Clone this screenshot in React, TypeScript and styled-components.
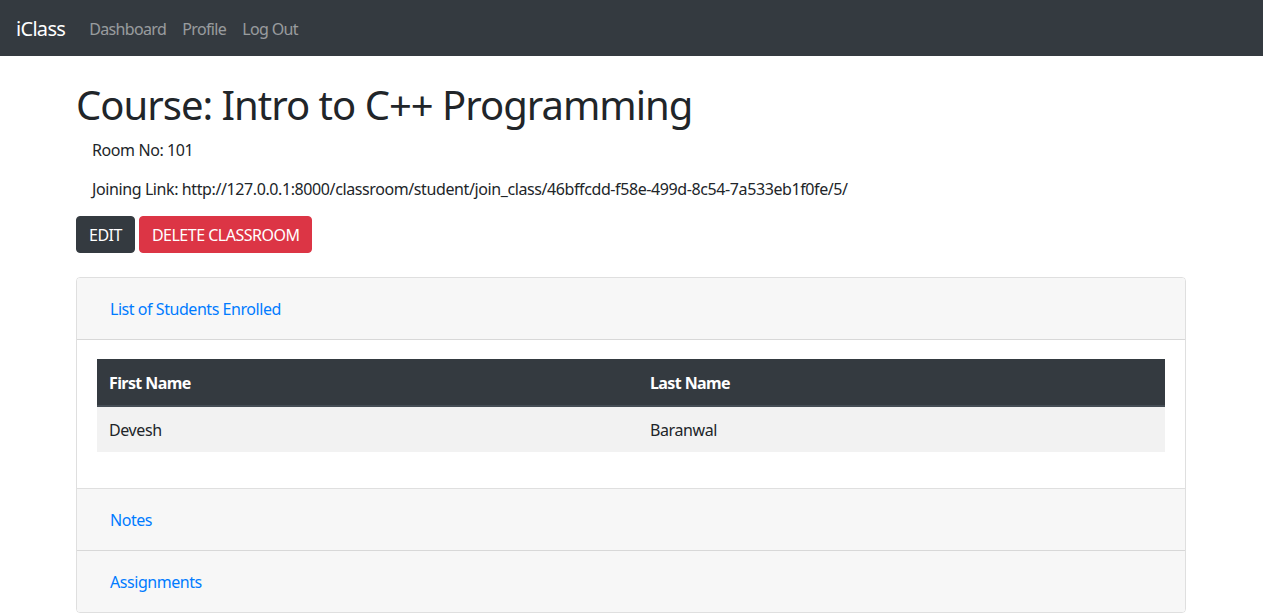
import React from "react";
import styled, { createGlobalStyle } from "styled-components";

const GlobalStyle = createGlobalStyle`
  *, *::before, *::after { box-sizing: border-box; }
  body {
    margin: 0;
    background: #fff;
    color: #212529;
    font-family: "Noto Sans", "Open Sans", sans-serif;
    font-size: 16px;
    line-height: 1.5;
    letter-spacing: -0.4px;
  }
`;

const Navbar = styled.nav`
  height: 56px;
  background: #343a40;
  display: flex;
  align-items: center;
  padding: 8px 16px;
`;

const Brand = styled.a`
  color: #fff;
  font-size: 20px;
  line-height: 30px;
  padding: 6px 0 4px;
  margin-right: 16px;
  text-decoration: none;
  letter-spacing: -0.7px;
`;

const NavList = styled.ul`
  display: flex;
  list-style: none;
  margin: 0;
  padding: 0;
`;

const NavLink = styled.a`
  display: block;
  padding: 9px 8px 7px;
  color: rgba(255, 255, 255, 0.5);
  text-decoration: none;
  letter-spacing: -0.64px;
`;

const Container = styled.main`
  max-width: 1140px;
  margin: 0 auto;
  padding: 0 15.5px 0 14.5px;
`;

const Title = styled.h1`
  font-size: 40px;
  line-height: 48px;
  font-weight: 400;
  letter-spacing: -1px;
  margin: 25px 0 8px;
`;

const Info = styled.p`
  margin: 0 0 14px;
  padding: 1px 0 0 16px;
`;

const ButtonRow = styled.div`
  display: flex;
  gap: 4px;
  margin-top: 15px;
`;

const Button = styled.button<{ $variant: "dark" | "danger" }>`
  font-family: inherit;
  letter-spacing: -0.5px;
  font-size: 16px;
  line-height: 23px;
  padding: 7px 12px 5px;
  border-radius: 4px;
  color: #fff;
  border: 1px solid ${(p) => (p.$variant === "dark" ? "#343a40" : "#dc3545")};
  background: ${(p) => (p.$variant === "dark" ? "#343a40" : "#dc3545")};
`;

const Accordion = styled.section`
  margin-top: 24px;
  border: 1px solid rgba(0, 0, 0, 0.125);
  border-radius: 4px;
  overflow: hidden;
`;

const CardHeader = styled.div<{ $last?: boolean }>`
  background: #f7f7f7;
  padding: 12px 20px;
  border-bottom: ${(p) => (p.$last ? "0" : "1px solid rgba(0, 0, 0, 0.125)")};
`;

const LinkButton = styled.button`
  font-family: inherit;
  letter-spacing: -0.45px;
  font-size: 16px;
  line-height: 23px;
  padding: 7px 12px 5px;
  border: 1px solid transparent;
  background: transparent;
  color: #007bff;
  cursor: pointer;
`;

const CardBody = styled.div`
  padding: 19px 20px 20px;
  border-bottom: 1px solid rgba(0, 0, 0, 0.125);
`;

const Table = styled.table`
  width: 100%;
  border-collapse: collapse;
  margin-bottom: 16px;
`;

const Th = styled.th<{ $width?: string }>`
  width: ${(p) => p.$width || "auto"};
  background: #343a40;
  color: #fff;
  text-align: left;
  font-weight: 700;
  letter-spacing: -0.6px;
  padding: 12px 12px 10px;
  line-height: 24px;
  border-bottom: 2px solid #454d55;
`;

const Td = styled.td`
  padding: 11px 12px 10px;
  line-height: 24px;
`;

const StripedRow = styled.tr`
  background: #f2f2f2;
`;

const students = [{ first: "Devesh", last: "Baranwal" }];

export default function App() {
  return (
    <>
      <GlobalStyle />
      <Navbar>
        <Brand href="#">iClass</Brand>
        <NavList>
          <li><NavLink href="#">Dashboard</NavLink></li>
          <li><NavLink href="#">Profile</NavLink></li>
          <li><NavLink href="#">Log Out</NavLink></li>
        </NavList>
      </Navbar>
      <Container>
        <Title>Course: Intro to C++ Programming</Title>
        <Info>Room No: 101</Info>
        <Info>
          Joining Link: http://127.0.0.1:8000/classroom/student/join_class/46bffcdd-f58e-499d-8c54-7a533eb1f0fe/5/
        </Info>
        <ButtonRow>
          <Button $variant="dark">EDIT</Button>
          <Button $variant="danger">DELETE CLASSROOM</Button>
        </ButtonRow>
        <Accordion>
          <CardHeader>
            <LinkButton>List of Students Enrolled</LinkButton>
          </CardHeader>
          <CardBody>
            <Table>
              <thead>
                <tr>
                  <Th $width="541px">First Name</Th>
                  <Th>Last Name</Th>
                </tr>
              </thead>
              <tbody>
                {students.map((s) => (
                  <StripedRow key={s.first}>
                    <Td>{s.first}</Td>
                    <Td>{s.last}</Td>
                  </StripedRow>
                ))}
              </tbody>
            </Table>
          </CardBody>
          <CardHeader>
            <LinkButton>Notes</LinkButton>
          </CardHeader>
          <CardHeader $last>
            <LinkButton>Assignments</LinkButton>
          </CardHeader>
        </Accordion>
      </Container>
    </>
  );
}
